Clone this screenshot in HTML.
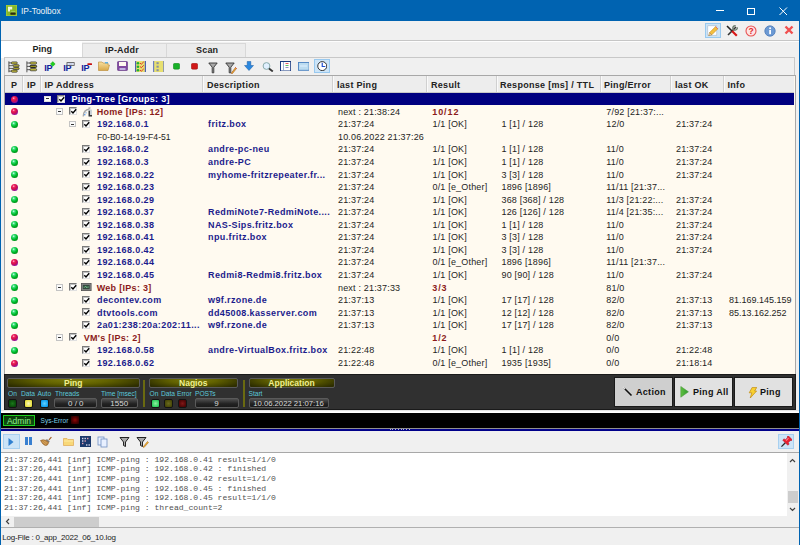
<!DOCTYPE html><html><head><meta charset="utf-8"><style>
*{box-sizing:border-box;margin:0;padding:0}
html,body{width:800px;height:545px;overflow:hidden;background:#0063b1;font-family:"Liberation Sans",sans-serif}
.abs{position:absolute}
#title{left:0;top:0;width:800px;height:21px;background:#0063b1}
#win{left:1.1px;top:21px;width:797.8px;height:524px;background:#f0f0f0}
.t{position:absolute;white-space:nowrap;line-height:13.5px;font-size:9px;letter-spacing:0.18px;color:#1e1e1e}
.b{font-weight:bold;letter-spacing:0.35px}
.nv{color:#1c1c8c}
.rd{color:#8b1a1a}
.row{position:absolute;left:0;width:789px;height:12.5px}
.dot{position:absolute;width:7px;height:7px;border-radius:50%}
.dg{background:radial-gradient(circle at 38% 32%,#e0fff0 0,#40e080 18%,#00c030 45%,#009018 75%,#006010 100%)}
.dm{background:radial-gradient(circle at 38% 32%,#ffc0d0 0,#f02060 20%,#d0104a 45%,#9010a0 75%,#5010b0 100%)}
.mb{position:absolute;width:6.6px;height:6.4px;border:1px solid #c4c4c4;background:#fafafa}
.mb:after{content:"";position:absolute;left:1.1px;top:1.7px;width:2.5px;height:1px;background:#333}
.cb{position:absolute;width:8px;height:8px;border:1px solid #7a7a7a;border-right-color:#e0e0e0;border-bottom-color:#e0e0e0;background:#fff;box-shadow:inset 1px 1px 0 #c0c0c0}
.cb svg{position:absolute;left:0;top:0}
</style></head><body>
<div id="title" class="abs">
<svg class="abs" style="left:6px;top:5px" width="11" height="11"><rect x="0" y="0" width="11" height="11" fill="#88b82a"/><rect x="0.3" y="0.3" width="10.4" height="10.4" fill="none" stroke="#a8d040" stroke-width="0.6"/><path d="M2 1.8 H6.2 V4.4 H4 V6.6 H2Z" fill="#f0f8e0"/><rect x="5.2" y="6.4" width="4" height="1" fill="#b0d870"/><rect x="4.4" y="7.6" width="5.2" height="2.2" rx="0.6" fill="#2a2a10"/></svg>
<div class="t" style="left:21px;top:5px;color:#eef3f8;font-size:8.4px;line-height:12px;letter-spacing:0">IP-Toolbox</div>
<div class="abs" style="left:716px;top:10px;width:7.5px;height:1px;background:#fff"></div>
<div class="abs" style="left:747px;top:7.5px;width:7.5px;height:7px;border:1px solid #fff"></div>
<svg class="abs" style="left:779px;top:7px" width="9" height="9"><path d="M0.5 0.5L8 8M8 0.5L0.5 8" stroke="#fff" stroke-width="1"/></svg>
</div>
<div id="win" class="abs"></div>
<div class="abs" style="left:1.1px;top:39.6px;width:797.8px;height:1.2px;background:#c6c6c6"></div>
<div class="abs" style="left:1.1px;top:40.8px;width:797.8px;height:0.9px;background:#fdfdfd"></div>
<div class="abs" style="left:705px;top:23px;width:16px;height:14.5px;background:#cce4f7;border:1px solid #99c9ef"></div>
<svg class="abs" style="left:707px;top:25px" width="12" height="11"><rect x="0.8" y="0.8" width="9" height="9.4" fill="#fff" stroke="#a8b8c8" stroke-width="0.6"/><path d="M2.6 7.6 L8.6 1.6 L10.8 3.8 L4.8 9.8Z" fill="#f4c040" stroke="#c88a18" stroke-width="0.6"/><path d="M2.6 7.6 L1.6 10.8 L4.8 9.8Z" fill="#f0d8a0" stroke="#a07030" stroke-width="0.5"/><path d="M8.6 1.6 L10.8 3.8" stroke="#e07070" stroke-width="1"/></svg>
<svg class="abs" style="left:725.5px;top:24.5px" width="12" height="12"><path d="M10 2 L2 10" stroke="#333" stroke-width="1.6"/><path d="M9.6 0.8 A2.2 2.2 0 1 0 11.2 2.4" fill="none" stroke="#6a7a6a" stroke-width="1.4"/><path d="M1 1 L6 6" stroke="#222" stroke-width="1.6"/><path d="M6 6 L10.8 10.8" stroke="#d81818" stroke-width="2.2"/></svg>
<svg class="abs" style="left:744.5px;top:24.5px" width="12" height="12"><circle cx="6" cy="6" r="5" fill="#fde4e4" stroke="#e85050" stroke-width="1.1"/><text x="6" y="9.2" font-size="8.5" font-weight="bold" text-anchor="middle" fill="#e02828" font-family="Liberation Sans">?</text></svg>
<svg class="abs" style="left:763.5px;top:24.5px" width="12" height="12"><circle cx="6" cy="6" r="5.2" fill="#6c9ad4" stroke="#4a78b8" stroke-width="0.8"/><rect x="5.2" y="5" width="1.8" height="4.2" fill="#fff"/><circle cx="6.1" cy="3.3" r="1" fill="#fff"/></svg>
<svg class="abs" style="left:783.5px;top:25px" width="10" height="10"><path d="M1.5 1.5 L8.5 8.5 M8.5 1.5 L1.5 8.5" stroke="#f05050" stroke-width="2.4"/></svg>
<div class="abs" style="left:1.1px;top:40.5px;width:81px;height:17px;background:#fff"></div>
<div class="abs" style="left:82px;top:43px;width:85px;height:14px;background:#ececec;border:1px solid #d8d8d8;border-bottom:none"></div>
<div class="abs" style="left:167px;top:43px;width:78.5px;height:14px;background:#ececec;border:1px solid #d8d8d8;border-bottom:none;border-left:none"></div>
<div class="t b" style="left:32.5px;top:43px;font-size:9px;letter-spacing:0">Ping</div>
<div class="t b" style="left:105px;top:44px;letter-spacing:0.2px">IP-Addr</div>
<div class="t b" style="left:196px;top:44px;letter-spacing:0.2px">Scan</div>
<div class="abs" style="left:4px;top:57px;width:791px;height:18.5px;background:#f0f0f0;border:1px solid #c8c8c8"></div>
<svg class="abs" style="left:7.5px;top:60.5px" width="13" height="12" viewBox="0 0 13 12"><path d="M0.9 0.3 V11.3 M0.9 1.9 H3.5 M0.9 4.7 H5 M0.9 7.4 H5 M0.9 10.1 H3.5" stroke="#333" stroke-width="0.8" fill="none"/><rect x="3.3" y="0.9" width="6" height="2.1" rx="1" fill="#c8c040" stroke="#2a2a2a" stroke-width="0.7"/><rect x="5.2" y="3.7" width="6" height="2.1" rx="1" fill="#b8b030" stroke="#2a2a2a" stroke-width="0.7"/><rect x="5.2" y="6.5" width="6" height="2.1" rx="1" fill="#a8a028" stroke="#2a2a2a" stroke-width="0.7"/><rect x="3.3" y="9.1" width="6" height="2.1" rx="1" fill="#c8c040" stroke="#2a2a2a" stroke-width="0.7"/></svg>
<svg class="abs" style="left:25.5px;top:60.5px" width="12" height="12" viewBox="0 0 12 12"><path d="M0.9 0.3 V11.3 M0.9 2 H4 M0.9 5.4 H4 M0.9 8.7 H4" stroke="#333" stroke-width="0.8" fill="none"/><rect x="4" y="0.9" width="6.6" height="2.2" rx="1" fill="#c8c040" stroke="#2a2a2a" stroke-width="0.7"/><rect x="4" y="4.3" width="6.6" height="2.2" rx="1" fill="#9a9420" stroke="#1a1a1a" stroke-width="0.9"/><rect x="4" y="7.6" width="6.6" height="2.2" rx="1" fill="#c8c040" stroke="#2a2a2a" stroke-width="0.7"/></svg>
<svg class="abs" style="left:44px;top:60.5px" width="12" height="12" viewBox="0 0 12 12"><text x="0.3" y="9.9" font-family="Liberation Sans" font-weight="bold" font-size="9" fill="#10209a" letter-spacing="-0.4">IP</text><path d="M8.8 0.6 L11.2 3 L8.8 5.4 L6.4 3Z" fill="#20d020" stroke="#10a010" stroke-width="0.4"/></svg>
<svg class="abs" style="left:62.5px;top:60.5px" width="12" height="12" viewBox="0 0 12 12"><text x="0.3" y="9.9" font-family="Liberation Sans" font-weight="bold" font-size="9" fill="#10209a" letter-spacing="-0.4">IP</text><rect x="4" y="1.6" width="7.2" height="2.8" fill="#e8ecf8" stroke="#505050" stroke-width="0.8"/><path d="M5.5 3 H9.5" stroke="#9aa8d0" stroke-width="0.8"/></svg>
<svg class="abs" style="left:80.5px;top:60.5px" width="12" height="12" viewBox="0 0 12 12"><text x="0.3" y="9.9" font-family="Liberation Sans" font-weight="bold" font-size="9" fill="#10209a" letter-spacing="-0.4">IP</text><rect x="6.4" y="2.3" width="4.6" height="1.8" rx="0.5" fill="#c81010"/></svg>
<svg class="abs" style="left:98px;top:61px" width="12" height="10" viewBox="0 0 12 10"><defs><linearGradient id="fg" x1="0" y1="0" x2="0" y2="1"><stop offset="0" stop-color="#f8e0a0"/><stop offset="1" stop-color="#d8a848"/></linearGradient></defs><path d="M0.5 1 H4 L5 2 H10 V4 H11.5 L10 9.5 H0.5Z" fill="url(#fg)" stroke="#b88830" stroke-width="0.6"/><rect x="7" y="1" width="3" height="1.5" fill="#60b0e0"/></svg>
<svg class="abs" style="left:116.8px;top:61px" width="11" height="10" viewBox="0 0 11 10"><rect x="0.5" y="0.5" width="10" height="9" rx="0.8" fill="#8048a0" stroke="#603080" stroke-width="0.6"/><rect x="2" y="1" width="7" height="4" fill="#fff8f0"/><rect x="2.5" y="7" width="6" height="2" fill="#c0b0e0"/></svg>
<svg class="abs" style="left:134.7px;top:60.5px" width="11" height="11.5" viewBox="0 0 11 11.5"><rect x="0" y="0" width="11" height="11.5" fill="#e8e070"/><rect x="0" y="0" width="1.2" height="11.5" fill="#5060b0"/><rect x="9.8" y="0" width="1.2" height="11.5" fill="#5060b0"/><circle cx="3" cy="2.2" r="1.3" fill="#20b030"/><circle cx="3" cy="5.7" r="1.3" fill="#20b030"/><circle cx="3" cy="9.2" r="1.3" fill="#20b030"/><path d="M5 2 L6.3 3.2 L8.8 0.8 M5 5.5 L6.3 6.7 L8.8 4.3 M5 9 L6.3 10.2 L8.8 7.8" stroke="#e02020" stroke-width="0.9" fill="none"/></svg>
<svg class="abs" style="left:152.7px;top:60.5px" width="11.5" height="11.5" viewBox="0 0 11.5 11.5"><rect x="0" y="0" width="11.5" height="11.5" fill="#e8e070"/><rect x="0" y="0" width="1.2" height="11.5" fill="#7080c0"/><rect x="10.3" y="0" width="1.2" height="11.5" fill="#7080c0"/><rect x="3.5" y="1.2" width="2.2" height="2" fill="#8890a0"/><rect x="3.5" y="4.7" width="2.2" height="2" fill="#8890a0"/><rect x="3.5" y="8.2" width="2.2" height="2" fill="#8890a0"/></svg>
<svg class="abs" style="left:173px;top:63px" width="7" height="6.5" viewBox="0 0 7 6.5"><rect x="0.3" y="0.3" width="6.4" height="5.9" rx="1.5" fill="#18b028" stroke="#108018" stroke-width="0.5"/></svg>
<svg class="abs" style="left:191px;top:63px" width="7" height="6.5" viewBox="0 0 7 6.5"><rect x="0.3" y="0.3" width="6.4" height="5.9" rx="1.5" fill="#d01818" stroke="#901010" stroke-width="0.5"/></svg>
<svg class="abs" style="left:207.7px;top:61.5px" width="10" height="12" viewBox="0 0 10 12"><path d="M0.8 1 H9.2 L5.8 5.2 V10.8 H4.2 V5.2Z" fill="#a8a8a8" stroke="#333" stroke-width="0.9"/></svg>
<svg class="abs" style="left:225px;top:61.5px" width="12" height="12" viewBox="0 0 12 12"><path d="M0.8 1 H9.2 L5.8 5.2 V10.8 H4.2 V5.2Z" fill="#a8a8a8" stroke="#333" stroke-width="0.9"/><path d="M6.5 10.8 L10.5 5.5 L11.5 6.5 L7.5 11.5 L6.3 11.7Z" fill="#f0b030" stroke="#904010" stroke-width="0.5"/><path d="M10.5 5.5 L11.5 6.5" stroke="#e04040" stroke-width="1"/></svg>
<svg class="abs" style="left:243.7px;top:61.3px" width="10" height="10" viewBox="0 0 10 10"><path d="M3.2 0.5 H6.8 V4.5 H9.5 L5 9.5 L0.5 4.5 H3.2Z" fill="#2a88e0" stroke="#1a5aa0" stroke-width="0.5"/></svg>
<svg class="abs" style="left:261.5px;top:62px" width="12" height="10" viewBox="0 0 12 10"><circle cx="4.5" cy="4" r="3.4" fill="#e0f0ff" stroke="#8aa" stroke-width="1"/><path d="M7 6.5 L10.8 9.5" stroke="#333" stroke-width="1.8"/></svg>
<svg class="abs" style="left:279.8px;top:60.7px" width="11.2" height="10.5" viewBox="0 0 11.2 10.5"><rect x="0.5" y="0.5" width="10.2" height="9.5" fill="#fff" stroke="#1a3a80" stroke-width="1"/><path d="M3.5 1 V9.5" stroke="#7090c0" stroke-width="0.7"/><rect x="5.5" y="2" width="3" height="1" fill="#e06060"/><rect x="5.5" y="4" width="3" height="1" fill="#60c060"/><rect x="5.5" y="6" width="3" height="1" fill="#9090c0"/></svg>
<svg class="abs" style="left:297.8px;top:62px" width="11.6" height="8.8" viewBox="0 0 11.6 8.8"><rect x="0.5" y="0.5" width="10.6" height="7.8" fill="#bcdcf0" stroke="#4a80c0" stroke-width="0.9"/><rect x="2" y="3.5" width="7" height="1" fill="#e0f0ff"/></svg>
<div class="abs" style="left:313.7px;top:58.5px;width:16.5px;height:14.5px;background:#cce4f7;border:1px solid #99c9ef"></div>
<svg class="abs" style="left:316.8px;top:61px" width="10.5" height="10.2" viewBox="0 0 10.5 10.2"><circle cx="5.25" cy="5.1" r="4.5" fill="#fff" stroke="#333" stroke-width="1"/><path d="M5.25 1.8 V5.5 H8.3" stroke="#2050d0" stroke-width="1.2" fill="none"/></svg>
<div class="abs" style="left:3.8px;top:75px;width:792.2px;height:299.5px;background:#fffaf0;border:1px solid #a8a8a8"></div>
<div class="abs" style="left:5px;top:76px;width:789px;height:16px;background:#ededed"></div>
<div class="abs" style="left:22px;top:76px;width:1px;height:16px;background:#d0d0d0"></div>
<div class="abs" style="left:23px;top:76px;width:1px;height:16px;background:#fafafa"></div>
<div class="abs" style="left:40px;top:76px;width:1px;height:16px;background:#d0d0d0"></div>
<div class="abs" style="left:41px;top:76px;width:1px;height:16px;background:#fafafa"></div>
<div class="abs" style="left:202px;top:76px;width:1px;height:16px;background:#d0d0d0"></div>
<div class="abs" style="left:203px;top:76px;width:1px;height:16px;background:#fafafa"></div>
<div class="abs" style="left:331.5px;top:76px;width:1px;height:16px;background:#d0d0d0"></div>
<div class="abs" style="left:332.5px;top:76px;width:1px;height:16px;background:#fafafa"></div>
<div class="abs" style="left:426px;top:76px;width:1px;height:16px;background:#d0d0d0"></div>
<div class="abs" style="left:427px;top:76px;width:1px;height:16px;background:#fafafa"></div>
<div class="abs" style="left:496px;top:76px;width:1px;height:16px;background:#d0d0d0"></div>
<div class="abs" style="left:497px;top:76px;width:1px;height:16px;background:#fafafa"></div>
<div class="abs" style="left:600px;top:76px;width:1px;height:16px;background:#d0d0d0"></div>
<div class="abs" style="left:601px;top:76px;width:1px;height:16px;background:#fafafa"></div>
<div class="abs" style="left:670px;top:76px;width:1px;height:16px;background:#d0d0d0"></div>
<div class="abs" style="left:671px;top:76px;width:1px;height:16px;background:#fafafa"></div>
<div class="abs" style="left:722.5px;top:76px;width:1px;height:16px;background:#d0d0d0"></div>
<div class="abs" style="left:723.5px;top:76px;width:1px;height:16px;background:#fafafa"></div>
<div class="abs" style="left:5px;top:91.5px;width:789px;height:1px;background:#c8c8c8"></div>
<div class="t b" style="left:11px;top:78.5px;color:#222;letter-spacing:0.3px">P</div>
<div class="t b" style="left:27px;top:78.5px;color:#222;letter-spacing:0.3px">IP</div>
<div class="t b" style="left:44.5px;top:78.5px;color:#222;letter-spacing:0.3px">IP Address</div>
<div class="t b" style="left:207px;top:78.5px;color:#222;letter-spacing:0.3px">Description</div>
<div class="t b" style="left:337px;top:78.5px;color:#222;letter-spacing:0.3px">last Ping</div>
<div class="t b" style="left:431px;top:78.5px;color:#222;letter-spacing:0.3px">Result</div>
<div class="t b" style="left:500px;top:78.5px;color:#222;letter-spacing:0.3px">Response [ms] / TTL</div>
<div class="t b" style="left:604px;top:78.5px;color:#222;letter-spacing:0.3px">Ping/Error</div>
<div class="t b" style="left:675px;top:78.5px;color:#222;letter-spacing:0.3px">last OK</div>
<div class="t b" style="left:727.5px;top:78.5px;color:#222;letter-spacing:0.3px">Info</div>
<div class="abs" style="left:5px;top:92.8px;width:789px;height:12.56px;background:#000080"></div>
<div class="dot dm" style="left:11px;top:95.8px"></div>
<div class="mb" style="left:44px;top:95.8px;border-color:#ddd"></div>
<div class="cb" style="left:57px;top:94.8px"><svg width="8" height="8"><path d="M1.3 3.2 L3 5 L6.2 1.3" fill="none" stroke="#000" stroke-width="1.4"/></svg></div>
<div class="t b" style="left:71.5px;top:93.15px;color:#fff;letter-spacing:0.3px">Ping-Tree [Groups: 3]</div>
<div class="dot dm" style="left:11px;top:108.36px"></div>
<div class="mb" style="left:56px;top:108.36px"></div>
<div class="cb" style="left:69px;top:107.36px"><svg width="8" height="8"><path d="M1.3 3.2 L3 5 L6.2 1.3" fill="none" stroke="#000" stroke-width="1.4"/></svg></div>
<svg class="abs" style="left:81.9px;top:107.06px" width="10.5" height="10"><path d="M1.2 9.5 Q1.2 3 7.5 2" fill="none" stroke="#a8a8a8" stroke-width="1.3"/><circle cx="2.8" cy="7.8" r="0.7" fill="#3a88e8"/><circle cx="4" cy="5.8" r="0.6" fill="#3a88e8"/><rect x="6.3" y="2.6" width="3.6" height="6.8" fill="#c8d0d8"/><path d="M7.3 3.8 V8.8 H10" fill="none" stroke="#383838" stroke-width="1.4"/><path d="M6.5 0.3 L8.5 1.8 M8.5 0.3 L6.5 1.8" stroke="#888" stroke-width="0.6"/></svg>
<div class="t b rd" style="left:96.7px;top:105.71px;letter-spacing:0.3px">Home [IPs: 12]</div>
<div class="t" style="left:338px;top:105.71px">next : 21:38:24</div>
<div class="t b rd" style="left:432.3px;top:105.71px;letter-spacing:0.9px">10/12</div>
<div class="t" style="left:606.3px;top:105.71px">7/92 [21:37:...</div>
<div class="dot dg" style="left:11px;top:120.92px"></div>
<div class="mb" style="left:69px;top:120.92px"></div>
<div class="cb" style="left:82px;top:119.92px"><svg width="8" height="8"><path d="M1.3 3.2 L3 5 L6.2 1.3" fill="none" stroke="#000" stroke-width="1.4"/></svg></div>
<div class="t b nv" style="left:97px;top:118.27px;letter-spacing:0.4px">192.168.0.1</div>
<div class="t b nv" style="left:208px;top:118.27px;letter-spacing:0.38px">fritz.box</div>
<div class="t" style="left:338px;top:118.27px">21:37:24</div>
<div class="t" style="left:432.5px;top:118.27px">1/1 [OK]</div>
<div class="t" style="left:501.5px;top:118.27px">1 [1] / 128</div>
<div class="t" style="left:606.3px;top:118.27px">12/0</div>
<div class="t" style="left:676px;top:118.27px">21:37:24</div>
<div class="t" style="left:97px;top:130.83px;font-size:8.6px;letter-spacing:0">F0-B0-14-19-F4-51</div>
<div class="t" style="left:338px;top:130.83px">10.06.2022 21:37:26</div>
<div class="dot dg" style="left:11px;top:146.04px"></div>
<div class="cb" style="left:82px;top:145.04px"><svg width="8" height="8"><path d="M1.3 3.2 L3 5 L6.2 1.3" fill="none" stroke="#000" stroke-width="1.4"/></svg></div>
<div class="t b nv" style="left:97px;top:143.39px;letter-spacing:0.4px">192.168.0.2</div>
<div class="t b nv" style="left:208px;top:143.39px;letter-spacing:0.38px">andre-pc-neu</div>
<div class="t" style="left:338px;top:143.39px">21:37:24</div>
<div class="t" style="left:432.5px;top:143.39px">1/1 [OK]</div>
<div class="t" style="left:501.5px;top:143.39px">1 [1] / 128</div>
<div class="t" style="left:606.3px;top:143.39px">11/0</div>
<div class="t" style="left:676px;top:143.39px">21:37:24</div>
<div class="dot dg" style="left:11px;top:158.6px"></div>
<div class="cb" style="left:82px;top:157.6px"><svg width="8" height="8"><path d="M1.3 3.2 L3 5 L6.2 1.3" fill="none" stroke="#000" stroke-width="1.4"/></svg></div>
<div class="t b nv" style="left:97px;top:155.95px;letter-spacing:0.4px">192.168.0.3</div>
<div class="t b nv" style="left:208px;top:155.95px;letter-spacing:0.38px">andre-PC</div>
<div class="t" style="left:338px;top:155.95px">21:37:24</div>
<div class="t" style="left:432.5px;top:155.95px">1/1 [OK]</div>
<div class="t" style="left:501.5px;top:155.95px">1 [1] / 128</div>
<div class="t" style="left:606.3px;top:155.95px">11/0</div>
<div class="t" style="left:676px;top:155.95px">21:37:24</div>
<div class="dot dg" style="left:11px;top:171.16px"></div>
<div class="cb" style="left:82px;top:170.16px"><svg width="8" height="8"><path d="M1.3 3.2 L3 5 L6.2 1.3" fill="none" stroke="#000" stroke-width="1.4"/></svg></div>
<div class="t b nv" style="left:97px;top:168.51px;letter-spacing:0.4px">192.168.0.22</div>
<div class="t b nv" style="left:208px;top:168.51px;letter-spacing:0.38px">myhome-fritzrepeater.fr...</div>
<div class="t" style="left:338px;top:168.51px">21:37:24</div>
<div class="t" style="left:432.5px;top:168.51px">1/1 [OK]</div>
<div class="t" style="left:501.5px;top:168.51px">3 [3] / 128</div>
<div class="t" style="left:606.3px;top:168.51px">11/0</div>
<div class="t" style="left:676px;top:168.51px">21:37:24</div>
<div class="dot dm" style="left:11px;top:183.72px"></div>
<div class="cb" style="left:82px;top:182.72px"><svg width="8" height="8"><path d="M1.3 3.2 L3 5 L6.2 1.3" fill="none" stroke="#000" stroke-width="1.4"/></svg></div>
<div class="t b nv" style="left:97px;top:181.07px;letter-spacing:0.4px">192.168.0.23</div>
<div class="t" style="left:338px;top:181.07px">21:37:24</div>
<div class="t" style="left:432.5px;top:181.07px">0/1 [e_Other]</div>
<div class="t" style="left:501.5px;top:181.07px">1896 [1896]</div>
<div class="t" style="left:606.3px;top:181.07px">11/11 [21:37...</div>
<div class="dot dg" style="left:11px;top:196.28px"></div>
<div class="cb" style="left:82px;top:195.28px"><svg width="8" height="8"><path d="M1.3 3.2 L3 5 L6.2 1.3" fill="none" stroke="#000" stroke-width="1.4"/></svg></div>
<div class="t b nv" style="left:97px;top:193.63px;letter-spacing:0.4px">192.168.0.29</div>
<div class="t" style="left:338px;top:193.63px">21:37:24</div>
<div class="t" style="left:432.5px;top:193.63px">1/1 [OK]</div>
<div class="t" style="left:501.5px;top:193.63px">368 [368] / 128</div>
<div class="t" style="left:606.3px;top:193.63px">11/3 [21:22:...</div>
<div class="t" style="left:676px;top:193.63px">21:37:24</div>
<div class="dot dg" style="left:11px;top:208.84px"></div>
<div class="cb" style="left:82px;top:207.84px"><svg width="8" height="8"><path d="M1.3 3.2 L3 5 L6.2 1.3" fill="none" stroke="#000" stroke-width="1.4"/></svg></div>
<div class="t b nv" style="left:97px;top:206.19px;letter-spacing:0.4px">192.168.0.37</div>
<div class="t b nv" style="left:208px;top:206.19px;letter-spacing:0.38px">RedmiNote7-RedmiNote....</div>
<div class="t" style="left:338px;top:206.19px">21:37:24</div>
<div class="t" style="left:432.5px;top:206.19px">1/1 [OK]</div>
<div class="t" style="left:501.5px;top:206.19px">126 [126] / 128</div>
<div class="t" style="left:606.3px;top:206.19px">11/4 [21:35:...</div>
<div class="t" style="left:676px;top:206.19px">21:37:24</div>
<div class="dot dg" style="left:11px;top:221.4px"></div>
<div class="cb" style="left:82px;top:220.4px"><svg width="8" height="8"><path d="M1.3 3.2 L3 5 L6.2 1.3" fill="none" stroke="#000" stroke-width="1.4"/></svg></div>
<div class="t b nv" style="left:97px;top:218.75px;letter-spacing:0.4px">192.168.0.38</div>
<div class="t b nv" style="left:208px;top:218.75px;letter-spacing:0.38px">NAS-Sips.fritz.box</div>
<div class="t" style="left:338px;top:218.75px">21:37:24</div>
<div class="t" style="left:432.5px;top:218.75px">1/1 [OK]</div>
<div class="t" style="left:501.5px;top:218.75px">1 [1] / 128</div>
<div class="t" style="left:606.3px;top:218.75px">11/0</div>
<div class="t" style="left:676px;top:218.75px">21:37:24</div>
<div class="dot dg" style="left:11px;top:233.96px"></div>
<div class="cb" style="left:82px;top:232.96px"><svg width="8" height="8"><path d="M1.3 3.2 L3 5 L6.2 1.3" fill="none" stroke="#000" stroke-width="1.4"/></svg></div>
<div class="t b nv" style="left:97px;top:231.31px;letter-spacing:0.4px">192.168.0.41</div>
<div class="t b nv" style="left:208px;top:231.31px;letter-spacing:0.38px">npu.fritz.box</div>
<div class="t" style="left:338px;top:231.31px">21:37:24</div>
<div class="t" style="left:432.5px;top:231.31px">1/1 [OK]</div>
<div class="t" style="left:501.5px;top:231.31px">3 [3] / 128</div>
<div class="t" style="left:606.3px;top:231.31px">11/0</div>
<div class="t" style="left:676px;top:231.31px">21:37:24</div>
<div class="dot dg" style="left:11px;top:246.52px"></div>
<div class="cb" style="left:82px;top:245.52px"><svg width="8" height="8"><path d="M1.3 3.2 L3 5 L6.2 1.3" fill="none" stroke="#000" stroke-width="1.4"/></svg></div>
<div class="t b nv" style="left:97px;top:243.87px;letter-spacing:0.4px">192.168.0.42</div>
<div class="t" style="left:338px;top:243.87px">21:37:24</div>
<div class="t" style="left:432.5px;top:243.87px">1/1 [OK]</div>
<div class="t" style="left:501.5px;top:243.87px">3 [3] / 128</div>
<div class="t" style="left:606.3px;top:243.87px">11/0</div>
<div class="t" style="left:676px;top:243.87px">21:37:24</div>
<div class="dot dm" style="left:11px;top:259.08px"></div>
<div class="cb" style="left:82px;top:258.08px"><svg width="8" height="8"><path d="M1.3 3.2 L3 5 L6.2 1.3" fill="none" stroke="#000" stroke-width="1.4"/></svg></div>
<div class="t b nv" style="left:97px;top:256.43px;letter-spacing:0.4px">192.168.0.44</div>
<div class="t" style="left:338px;top:256.43px">21:37:24</div>
<div class="t" style="left:432.5px;top:256.43px">0/1 [e_Other]</div>
<div class="t" style="left:501.5px;top:256.43px">1896 [1896]</div>
<div class="t" style="left:606.3px;top:256.43px">11/11 [21:37...</div>
<div class="dot dg" style="left:11px;top:271.64px"></div>
<div class="cb" style="left:82px;top:270.64px"><svg width="8" height="8"><path d="M1.3 3.2 L3 5 L6.2 1.3" fill="none" stroke="#000" stroke-width="1.4"/></svg></div>
<div class="t b nv" style="left:97px;top:268.99px;letter-spacing:0.4px">192.168.0.45</div>
<div class="t b nv" style="left:208px;top:268.99px;letter-spacing:0.38px">Redmi8-Redmi8.fritz.box</div>
<div class="t" style="left:338px;top:268.99px">21:37:24</div>
<div class="t" style="left:432.5px;top:268.99px">1/1 [OK]</div>
<div class="t" style="left:501.5px;top:268.99px">90 [90] / 128</div>
<div class="t" style="left:606.3px;top:268.99px">11/0</div>
<div class="t" style="left:676px;top:268.99px">21:37:24</div>
<div class="dot dg" style="left:11px;top:284.2px"></div>
<div class="mb" style="left:56px;top:284.2px"></div>
<div class="cb" style="left:69px;top:283.2px"><svg width="8" height="8"><path d="M1.3 3.2 L3 5 L6.2 1.3" fill="none" stroke="#000" stroke-width="1.4"/></svg></div>
<svg class="abs" style="left:81.2px;top:283.4px" width="10.5" height="8"><rect x="0.4" y="0.4" width="9.7" height="7.2" fill="#8a8a8a" stroke="#505050" stroke-width="0.8"/><rect x="1.8" y="1.8" width="6.9" height="4.4" fill="#34483c"/><path d="M2.5 4.2 H4 L4.8 3 L5.6 5 L6.3 4 H8" fill="none" stroke="#80e0a0" stroke-width="0.6"/></svg>
<div class="t b rd" style="left:96.7px;top:281.55px;letter-spacing:0.3px">Web [IPs: 3]</div>
<div class="t" style="left:338px;top:281.55px">next : 21:37:33</div>
<div class="t b rd" style="left:432.3px;top:281.55px;letter-spacing:0.9px">3/3</div>
<div class="t" style="left:606.3px;top:281.55px">81/0</div>
<div class="dot dg" style="left:11px;top:296.76px"></div>
<div class="cb" style="left:82px;top:295.76px"><svg width="8" height="8"><path d="M1.3 3.2 L3 5 L6.2 1.3" fill="none" stroke="#000" stroke-width="1.4"/></svg></div>
<div class="t b nv" style="left:97px;top:294.11px;letter-spacing:0.4px">decontev.com</div>
<div class="t b nv" style="left:208px;top:294.11px;letter-spacing:0.38px">w9f.rzone.de</div>
<div class="t" style="left:338px;top:294.11px">21:37:13</div>
<div class="t" style="left:432.5px;top:294.11px">1/1 [OK]</div>
<div class="t" style="left:501.5px;top:294.11px">17 [17] / 128</div>
<div class="t" style="left:606.3px;top:294.11px">82/0</div>
<div class="t" style="left:676px;top:294.11px">21:37:13</div>
<div class="t" style="left:729px;top:294.11px;letter-spacing:0">81.169.145.159</div>
<div class="dot dg" style="left:11px;top:309.32px"></div>
<div class="cb" style="left:82px;top:308.32px"><svg width="8" height="8"><path d="M1.3 3.2 L3 5 L6.2 1.3" fill="none" stroke="#000" stroke-width="1.4"/></svg></div>
<div class="t b nv" style="left:97px;top:306.67px;letter-spacing:0.4px">dtvtools.com</div>
<div class="t b nv" style="left:208px;top:306.67px;letter-spacing:0.38px">dd45008.kasserver.com</div>
<div class="t" style="left:338px;top:306.67px">21:37:13</div>
<div class="t" style="left:432.5px;top:306.67px">1/1 [OK]</div>
<div class="t" style="left:501.5px;top:306.67px">12 [12] / 128</div>
<div class="t" style="left:606.3px;top:306.67px">82/0</div>
<div class="t" style="left:676px;top:306.67px">21:37:13</div>
<div class="t" style="left:729px;top:306.67px;letter-spacing:0">85.13.162.252</div>
<div class="dot dg" style="left:11px;top:321.88px"></div>
<div class="cb" style="left:82px;top:320.88px"><svg width="8" height="8"><path d="M1.3 3.2 L3 5 L6.2 1.3" fill="none" stroke="#000" stroke-width="1.4"/></svg></div>
<div class="t b nv" style="left:97px;top:319.23px;letter-spacing:0.4px">2a01:238:20a:202:11...</div>
<div class="t b nv" style="left:208px;top:319.23px;letter-spacing:0.38px">w9f.rzone.de</div>
<div class="t" style="left:338px;top:319.23px">21:37:13</div>
<div class="t" style="left:432.5px;top:319.23px">1/1 [OK]</div>
<div class="t" style="left:501.5px;top:319.23px">17 [17] / 128</div>
<div class="t" style="left:606.3px;top:319.23px">82/0</div>
<div class="t" style="left:676px;top:319.23px">21:37:13</div>
<div class="dot dm" style="left:11px;top:334.44px"></div>
<div class="mb" style="left:56px;top:334.44px"></div>
<div class="cb" style="left:69px;top:333.44px"><svg width="8" height="8"><path d="M1.3 3.2 L3 5 L6.2 1.3" fill="none" stroke="#000" stroke-width="1.4"/></svg></div>
<div class="t b rd" style="left:83.7px;top:331.79px;letter-spacing:0.3px">VM's [IPs: 2]</div>
<div class="t b rd" style="left:432.3px;top:331.79px;letter-spacing:0.9px">1/2</div>
<div class="t" style="left:606.3px;top:331.79px">0/0</div>
<div class="dot dg" style="left:11px;top:347.0px"></div>
<div class="cb" style="left:82px;top:346.0px"><svg width="8" height="8"><path d="M1.3 3.2 L3 5 L6.2 1.3" fill="none" stroke="#000" stroke-width="1.4"/></svg></div>
<div class="t b nv" style="left:97px;top:344.35px;letter-spacing:0.4px">192.168.0.58</div>
<div class="t b nv" style="left:208px;top:344.35px;letter-spacing:0.38px">andre-VirtualBox.fritz.box</div>
<div class="t" style="left:338px;top:344.35px">21:22:48</div>
<div class="t" style="left:432.5px;top:344.35px">1/1 [OK]</div>
<div class="t" style="left:501.5px;top:344.35px">1 [1] / 128</div>
<div class="t" style="left:606.3px;top:344.35px">0/0</div>
<div class="t" style="left:676px;top:344.35px">21:22:48</div>
<div class="dot dm" style="left:11px;top:359.56px"></div>
<div class="cb" style="left:82px;top:358.56px"><svg width="8" height="8"><path d="M1.3 3.2 L3 5 L6.2 1.3" fill="none" stroke="#000" stroke-width="1.4"/></svg></div>
<div class="t b nv" style="left:97px;top:356.91px;letter-spacing:0.4px">192.168.0.62</div>
<div class="t" style="left:338px;top:356.91px">21:22:48</div>
<div class="t" style="left:432.5px;top:356.91px">0/1 [e_Other]</div>
<div class="t" style="left:501.5px;top:356.91px">1935 [1935]</div>
<div class="t" style="left:606.3px;top:356.91px">0/0</div>
<div class="t" style="left:676px;top:356.91px">21:18:14</div>
<div class="abs" style="left:3.8px;top:374.2px;width:792.2px;height:35.6px;background:#303030;border:1px solid #1a1a1a"></div>
<div class="abs" style="left:7px;top:377.5px;width:132.5px;height:10px;border-radius:2px;border:1px solid #5a5a5a;background:radial-gradient(ellipse 60% 120% at 50% 10%,#7c7c0a 0%,#626200 45%,#2e2e00 100%)"></div>
<div class="t b" style="left:7px;width:132.5px;text-align:center;top:376.5px;color:#f0f090;font-size:8.5px;line-height:12px;letter-spacing:0">Ping</div>
<div class="abs" style="left:148.7px;top:377.5px;width:89px;height:10px;border-radius:2px;border:1px solid #5a5a5a;background:radial-gradient(ellipse 60% 120% at 50% 10%,#7c7c0a 0%,#626200 45%,#2e2e00 100%)"></div>
<div class="t b" style="left:148.7px;width:89px;text-align:center;top:376.5px;color:#f0f090;font-size:8.5px;line-height:12px;letter-spacing:0">Nagios</div>
<div class="abs" style="left:248.5px;top:377.5px;width:86px;height:10px;border-radius:2px;border:1px solid #5a5a5a;background:radial-gradient(ellipse 60% 120% at 50% 10%,#7c7c0a 0%,#626200 45%,#2e2e00 100%)"></div>
<div class="t b" style="left:248.5px;width:86px;text-align:center;top:376.5px;color:#f0f090;font-size:8.5px;line-height:12px;letter-spacing:0">Application</div>
<div class="abs" style="left:143px;top:380px;width:2px;height:27px;background:#6a6a10"></div>
<div class="abs" style="left:242.5px;top:380px;width:2px;height:27px;background:#6a6a10"></div>
<div class="t" style="left:8px;top:388px;color:#5cc8d8;font-size:6.7px;line-height:11px;letter-spacing:-0.05px">On</div>
<div class="t" style="left:21px;top:388px;color:#5cc8d8;font-size:6.7px;line-height:11px;letter-spacing:-0.05px">Data</div>
<div class="t" style="left:37.5px;top:388px;color:#5cc8d8;font-size:6.7px;line-height:11px;letter-spacing:-0.05px">Auto</div>
<div class="t" style="left:55px;top:388px;color:#5cc8d8;font-size:6.7px;line-height:11px;letter-spacing:-0.05px">Threads</div>
<div class="t" style="left:101px;top:388px;color:#5cc8d8;font-size:6.7px;line-height:11px;letter-spacing:-0.05px">Time [msec]</div>
<div class="t" style="left:149.5px;top:388px;color:#5cc8d8;font-size:6.7px;line-height:11px;letter-spacing:-0.05px">On</div>
<div class="t" style="left:161px;top:388px;color:#5cc8d8;font-size:6.7px;line-height:11px;letter-spacing:-0.05px">Data</div>
<div class="t" style="left:177px;top:388px;color:#5cc8d8;font-size:6.7px;line-height:11px;letter-spacing:-0.05px">Error</div>
<div class="t" style="left:195px;top:388px;color:#5cc8d8;font-size:6.7px;line-height:11px;letter-spacing:-0.05px">POSTs</div>
<div class="t" style="left:248.5px;top:388px;color:#5cc8d8;font-size:6.7px;line-height:11px;letter-spacing:-0.05px">Start</div>
<div class="abs" style="left:8px;top:399.2px;width:9px;height:8.4px;background:radial-gradient(circle at 50% 50%,#1a7a1a 0,#0a4a0a 70%);border:0.6px solid #141414;border-radius:2px"></div>
<div class="abs" style="left:24px;top:399.2px;width:9px;height:8.4px;background:radial-gradient(circle at 50% 50%,#f8f8c0 0,#e8e040 70%);border:0.6px solid #141414;border-radius:2px"></div>
<div class="abs" style="left:40px;top:399.2px;width:9px;height:8.4px;background:radial-gradient(circle at 50% 50%,#60d0ff 0,#10a0f0 70%);border:0.6px solid #141414;border-radius:2px"></div>
<div class="abs" style="left:150.8px;top:399.2px;width:9px;height:8.4px;background:radial-gradient(circle at 50% 50%,#90f0a0 0,#30d060 70%);border:0.6px solid #141414;border-radius:2px"></div>
<div class="abs" style="left:163.9px;top:399.2px;width:9px;height:8.4px;background:radial-gradient(circle at 50% 50%,#6a6a20 0,#4a4a08 70%);border:0.6px solid #141414;border-radius:2px"></div>
<div class="abs" style="left:178.4px;top:399.2px;width:9px;height:8.4px;background:radial-gradient(circle at 50% 50%,#801818 0,#500606 70%);border:0.6px solid #141414;border-radius:2px"></div>
<div class="abs" style="left:54.3px;top:398.3px;width:43px;height:9.7px;border-radius:2px;border:1px solid #5a5a5a;background:linear-gradient(180deg,#505050,#222 60%,#1a1a1a)"></div>
<div class="t" style="left:54.3px;width:43px;text-align:center;top:397.6px;color:#d8d8d8;font-size:8px;line-height:11px;letter-spacing:0">0 / 0</div>
<div class="abs" style="left:100.7px;top:398.3px;width:37px;height:9.7px;border-radius:2px;border:1px solid #5a5a5a;background:linear-gradient(180deg,#505050,#222 60%,#1a1a1a)"></div>
<div class="t" style="left:100.7px;width:37px;text-align:center;top:397.6px;color:#d8d8d8;font-size:8px;line-height:11px;letter-spacing:0">1550</div>
<div class="abs" style="left:194.5px;top:398.3px;width:44px;height:9.7px;border-radius:2px;border:1px solid #5a5a5a;background:linear-gradient(180deg,#505050,#222 60%,#1a1a1a)"></div>
<div class="t" style="left:194.5px;width:44px;text-align:center;top:397.6px;color:#d8d8d8;font-size:8px;line-height:11px;letter-spacing:0">9</div>
<div class="abs" style="left:248.5px;top:398.3px;width:80px;height:9.7px;border-radius:2px;border:1px solid #5a5a5a;background:linear-gradient(180deg,#505050,#222 60%,#1a1a1a)"></div>
<div class="t" style="left:248.5px;width:80px;text-align:center;top:397.6px;color:#d8d8d8;font-size:7.7px;line-height:11px;letter-spacing:0">10.06.2022 21:07:16</div>
<div class="abs" style="left:613.7px;top:376.6px;width:59px;height:30px;background:#cfcfcf;border:1px solid #1a1a1a"></div>
<svg class="abs" style="left:622px;top:386px" width="11" height="11"><path d="M2 2 L9.5 9.5" stroke="#111" stroke-width="1.6"/><path d="M1 1 L3 3" stroke="#ddd" stroke-width="1.5"/></svg>
<div class="t b" style="left:636px;top:386px;color:#111;font-size:9px;letter-spacing:0.3px">Action</div>
<div class="abs" style="left:674px;top:376.6px;width:58.5px;height:30px;background:#e1e1e1;border:1px solid #1a1a1a"></div>
<svg class="abs" style="left:680px;top:386px" width="10" height="12"><defs><linearGradient id="pg" x1="0" y1="0" x2="1" y2="0"><stop offset="0" stop-color="#60c040"/><stop offset="1" stop-color="#309a30"/></linearGradient></defs><path d="M0.8 0.5 L8.4 5.8 L0.8 11.2Z" fill="url(#pg)" stroke="#4a9a3a" stroke-width="0.6"/></svg>
<div class="t b" style="left:693px;top:386px;color:#111;font-size:9px;letter-spacing:0.3px">Ping All</div>
<div class="abs" style="left:734px;top:376.6px;width:58.5px;height:30px;background:#e1e1e1;border:1px solid #1a1a1a"></div>
<svg class="abs" style="left:747.5px;top:386.8px" width="9.5" height="11.5"><path d="M4.2 0.4 H8.8 L6.6 4 H8.6 L2.2 11.1 L3.8 5.8 H1.2Z" fill="#f8d030" stroke="#c08a10" stroke-width="0.7"/></svg>
<div class="t b" style="left:760px;top:386px;color:#111;font-size:9px;letter-spacing:0.3px">Ping</div>
<div class="abs" style="left:1.1px;top:409.5px;width:797.8px;height:3.5px;background:linear-gradient(180deg,#d8d8d8,#ffffff 60%)"></div>
<div class="abs" style="left:1.1px;top:413px;width:797.8px;height:14.5px;background:#000"></div>
<div class="abs" style="left:3px;top:415px;width:32px;height:11px;border:1px solid #20d020;background:linear-gradient(180deg,#0a3a0a,#105010)"></div>
<div class="t" style="left:3px;width:32px;text-align:center;top:414.5px;color:#90f090;font-size:8.5px;line-height:12px;letter-spacing:0">Admin</div>
<div class="t" style="left:40.5px;top:414.5px;color:#7ad0e8;font-size:6.6px;line-height:12px;letter-spacing:0">Sys-Error</div>
<div class="abs" style="left:71.3px;top:416.3px;width:7.5px;height:7.5px;background:radial-gradient(circle,#900808 0,#500000 50%,#1a0000 100%)"></div>
<div class="abs" style="left:1.1px;top:427.5px;width:797.8px;height:1px;background:#909090"></div>
<div class="abs" style="left:1.1px;top:428.5px;width:797.8px;height:2.5px;background:#00008a"></div>
<div class="abs" style="left:389.5px;top:429.2px;width:1.2px;height:1.2px;background:#b8b8d0"></div>
<div class="abs" style="left:392.25px;top:429.2px;width:1.2px;height:1.2px;background:#b8b8d0"></div>
<div class="abs" style="left:395.0px;top:429.2px;width:1.2px;height:1.2px;background:#b8b8d0"></div>
<div class="abs" style="left:397.75px;top:429.2px;width:1.2px;height:1.2px;background:#b8b8d0"></div>
<div class="abs" style="left:400.5px;top:429.2px;width:1.2px;height:1.2px;background:#b8b8d0"></div>
<div class="abs" style="left:403.25px;top:429.2px;width:1.2px;height:1.2px;background:#b8b8d0"></div>
<div class="abs" style="left:406.0px;top:429.2px;width:1.2px;height:1.2px;background:#b8b8d0"></div>
<div class="abs" style="left:408.75px;top:429.2px;width:1.2px;height:1.2px;background:#b8b8d0"></div>
<div class="abs" style="left:3px;top:434px;width:17px;height:15px;background:#cce4f7;border:1px solid #a8d0f0"></div>
<svg class="abs" style="left:7px;top:437px" width="8" height="10"><path d="M1.5 1 L6.5 5 L1.5 9Z" fill="#3080d0"/></svg>
<div class="abs" style="left:25px;top:437px;width:2.5px;height:8px;background:#3a80d0"></div><div class="abs" style="left:29px;top:437px;width:2.5px;height:8px;background:#3a80d0"></div>
<svg class="abs" style="left:40.3px;top:436px" width="12" height="10"><path d="M8.5 3.5 L11 0.8 L11.8 1.6 L9.3 4.3Z" fill="#a05a20"/><path d="M6.8 3 L9.8 5.2 L8.8 6.5 L5.8 4.3Z" fill="#808080"/><path d="M0.5 4.5 Q3 3 5.8 4.3 L8.8 6.5 Q8 9.5 5.5 9.8 Q2 8 0.5 4.5Z" fill="#c08840" stroke="#7a4a18" stroke-width="0.5"/><path d="M2 5.5 L6 8.5 M3.5 4.6 L7.2 7.4" stroke="#e8c080" stroke-width="0.5"/></svg>
<svg class="abs" style="left:62.6px;top:438px" width="11" height="8"><path d="M0.5 0.5 H4 L5 1.5 H10.5 V7.5 H0.5Z" fill="#f8d878" stroke="#e0a850" stroke-width="0.7"/><path d="M0.8 3 H10.2" stroke="#fff0b0" stroke-width="0.8"/></svg>
<svg class="abs" style="left:79.5px;top:436px" width="11.5" height="11"><rect x="0" y="0" width="11.5" height="11" fill="#1c3a6c"/><rect x="2" y="1.8" width="1.4" height="1.4" fill="#dde"/><rect x="4.5" y="1.8" width="1.4" height="1.4" fill="#dde"/><rect x="7" y="1.8" width="1.4" height="1.4" fill="#e8a0b0"/><rect x="2" y="4.3" width="1.4" height="1.4" fill="#dde"/><rect x="4.5" y="4.3" width="1.4" height="1.4" fill="#e8a0b0"/><rect x="2" y="6.8" width="1.4" height="1.4" fill="#e8a0b0"/><rect x="6" y="8.3" width="1.4" height="1.4" fill="#dde"/><rect x="8.5" y="8.3" width="1.4" height="1.4" fill="#dde"/></svg>
<svg class="abs" style="left:97px;top:436px" width="11" height="12"><rect x="1" y="1" width="6" height="8" fill="#e8f0ff" stroke="#7090c0" stroke-width="0.8"/><rect x="4" y="3" width="6" height="8" fill="#e8f0ff" stroke="#7090c0" stroke-width="0.8"/></svg>
<svg class="abs" style="left:118.5px;top:436px" width="11" height="12"><path d="M1 1.5 H10 L6.5 6 V10.5 L4.5 9.5 V6Z" fill="#aaa" stroke="#222" stroke-width="1"/></svg>
<svg class="abs" style="left:136px;top:436px" width="13" height="12"><path d="M1 1.5 H10 L6.5 6 V10.5 L4.5 9.5 V6Z" fill="#aaa" stroke="#222" stroke-width="1"/><path d="M7 11 L11.5 5.5 L12.5 6.5 L8 11.5Z" fill="#f0b030" stroke="#a06010" stroke-width="0.5"/></svg>
<div class="abs" style="left:777.8px;top:434.2px;width:16.2px;height:14.6px;background:#cce4f7;border:1px solid #a8d0f0"></div>
<svg class="abs" style="left:780px;top:436px" width="12" height="12"><g transform="rotate(45 6 6)"><rect x="5.4" y="7" width="1.3" height="5.5" fill="#282828"/><path d="M3.2 0 H8.8 V1.8 H8 V5 H9.6 V7 H2.4 V5 H4 V1.8 H3.2Z" fill="#e82030" stroke="#b01020" stroke-width="0.5"/><rect x="4.6" y="1.5" width="1" height="3.5" fill="#ff8090"/></g></svg>
<div class="abs" style="left:1.1px;top:451.5px;width:797.8px;height:1px;background:#a8a8a8"></div>
<div class="abs" style="left:1.1px;top:452.5px;width:785.5px;height:63px;background:#fff"></div>
<div class="t" style="left:3.9px;top:454.5px;font-family:'Liberation Mono',monospace;font-size:8.1px;line-height:9.72px;letter-spacing:0;color:#505050">21:37:26,441 [inf] ICMP-ping : 192.168.0.41 result=1/1/0</div>
<div class="t" style="left:3.9px;top:464.22px;font-family:'Liberation Mono',monospace;font-size:8.1px;line-height:9.72px;letter-spacing:0;color:#505050">21:37:26,441 [inf] ICMP-ping : 192.168.0.42 : finished</div>
<div class="t" style="left:3.9px;top:473.94px;font-family:'Liberation Mono',monospace;font-size:8.1px;line-height:9.72px;letter-spacing:0;color:#505050">21:37:26,441 [inf] ICMP-ping : 192.168.0.42 result=1/1/0</div>
<div class="t" style="left:3.9px;top:483.66px;font-family:'Liberation Mono',monospace;font-size:8.1px;line-height:9.72px;letter-spacing:0;color:#505050">21:37:26,441 [inf] ICMP-ping : 192.168.0.45 : finished</div>
<div class="t" style="left:3.9px;top:493.38px;font-family:'Liberation Mono',monospace;font-size:8.1px;line-height:9.72px;letter-spacing:0;color:#505050">21:37:26,441 [inf] ICMP-ping : 192.168.0.45 result=1/1/0</div>
<div class="t" style="left:3.9px;top:503.1px;font-family:'Liberation Mono',monospace;font-size:8.1px;line-height:9.72px;letter-spacing:0;color:#505050">21:37:26,441 [inf] ICMP-ping : thread_count=2</div>
<div class="abs" style="left:787px;top:452.5px;width:11px;height:63.5px;background:#f0f0f0"></div>
<svg class="abs" style="left:789px;top:458px" width="7" height="5"><path d="M1 4 L3.5 1.5 L6 4" fill="none" stroke="#404040" stroke-width="1.2"/></svg>
<div class="abs" style="left:787.5px;top:491.4px;width:10px;height:11.3px;background:#cdcdcd"></div>
<svg class="abs" style="left:789px;top:507px" width="7" height="5"><path d="M1 1 L3.5 3.5 L6 1" fill="none" stroke="#404040" stroke-width="1.2"/></svg>
<div class="abs" style="left:1.1px;top:516px;width:785.5px;height:11px;background:#f0f0f0"></div>
<svg class="abs" style="left:5px;top:518px" width="5" height="7"><path d="M4 1 L1.5 3.5 L4 6" fill="none" stroke="#404040" stroke-width="1.2"/></svg>
<div class="abs" style="left:14.2px;top:516.5px;width:84.8px;height:10px;background:#cdcdcd"></div>
<div class="abs" style="left:787px;top:516px;width:11px;height:11px;background:#f0f0f0"></div>
<div class="abs" style="left:1.1px;top:527.2px;width:797.8px;height:1px;background:#b0b0b0"></div>
<div class="abs" style="left:1.1px;top:528.2px;width:797.8px;height:17px;background:#f0f0f0"></div>
<div class="t" style="left:2.2px;top:531.8px;font-size:8px;line-height:12px;letter-spacing:-0.2px;color:#222">Log-File : 0_app_2022_06_10.log</div>
</body></html>
